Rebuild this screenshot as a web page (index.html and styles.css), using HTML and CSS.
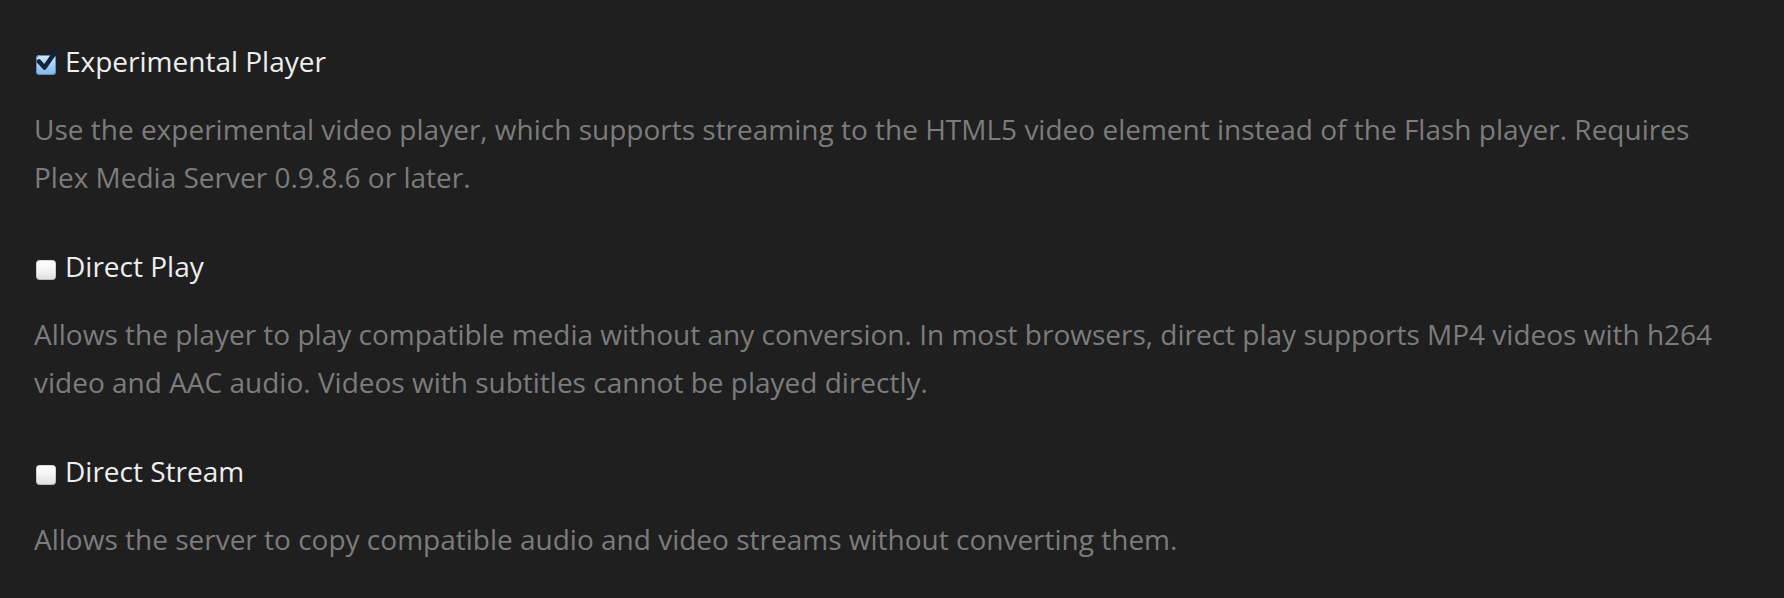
FILE: index.html
```html
<!DOCTYPE html>
<html lang="en">
<head>
    <meta charset="UTF-8">
    <title>Player Settings</title>
    <link rel="stylesheet" href="styles.css">
</head>
<body>
    <div class="settings">
        <div class="setting">
            <label class="setting-title">
                <span class="checkbox checked">
                    <svg viewBox="0 0 24 24" width="24" height="24"><path d="M4 13.5 L9.5 19.5 L21 3" fill="none" stroke="#13243a" stroke-width="4.5" stroke-linecap="round" stroke-linejoin="round"/></svg>
                </span>
                Experimental Player
            </label>
            <p class="setting-desc">Use the experimental video player, which supports streaming to the HTML5 video element instead of the Flash player. Requires Plex Media Server 0.9.8.6 or later.</p>
        </div>
        <div class="setting">
            <label class="setting-title">
                <span class="checkbox"></span>
                Direct Play
            </label>
            <p class="setting-desc">Allows the player to play compatible media without any conversion. In most browsers, direct play supports MP4 videos with h264 video and AAC audio. Videos with subtitles cannot be played directly.</p>
        </div>
        <div class="setting">
            <label class="setting-title">
                <span class="checkbox"></span>
                Direct Stream
            </label>
            <p class="setting-desc">Allows the server to copy compatible audio and video streams without converting them.</p>
        </div>
    </div>
</body>
</html>
```

FILE: styles.css
```css
body {
    margin: 0;
    padding: 0;
    background-color: #1f1f1f;
    font-family: 'Open Sans', 'Noto Sans', sans-serif;
}

.settings {
    padding: 43px 34px 0 34px;
}

.setting {
    margin-bottom: 47px;
}

.setting-title {
    display: flex;
    align-items: center;
    gap: 9px;
    font-size: 28px;
    line-height: 36px;
    color: #eeeeee;
}

.checkbox {
    position: relative;
    flex: none;
    width: 20px;
    height: 20px;
    margin-left: 2px;
    margin-top: 8px;
    border-radius: 4px;
    background: linear-gradient(#ffffff, #f4f4f4 50%, #dedede);
    box-shadow: inset 0 0 0 1px rgba(0, 0, 0, 0.15);
}

.checkbox.checked {
    background: linear-gradient(#d8eafc, #a9d0f5 50%, #7fb6ea);
    box-shadow: inset 0 0 0 1px #5f8fc0;
}

.checkbox svg {
    position: absolute;
    left: -1px;
    top: -7px;
}

.setting-desc {
    margin: 26px 0 0 0;
    font-size: 28px;
    line-height: 48px;
    color: #7c7c7c;
}
```
